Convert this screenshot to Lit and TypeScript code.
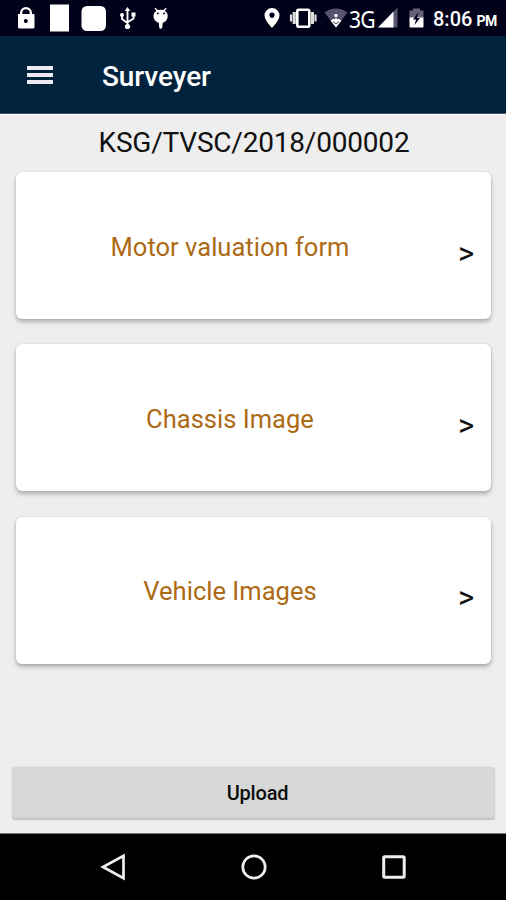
import { LitElement, html, css, svg } from "lit";
import { customElement, property } from "lit/decorators.js";

@customElement("survey-card")
class SurveyCard extends LitElement {
  @property() label = "";

  static styles = css`
    :host {
      display: flex;
      align-items: center;
      box-sizing: border-box;
      height: 147px;
      padding: 0 16px 0 0;
      background: #fff;
      border-radius: 6px;
      box-shadow: 0 3px 4px rgba(0, 0, 0, 0.26), 0 0 2px rgba(0, 0, 0, 0.14);
    }
    .label {
      flex: 1;
      text-align: center;
      color: #ad6a14;
      font-size: 25.5px;
      line-height: 32px;
      letter-spacing: 0.02px;
      padding-top: 2px;
    }
    .chevron {
      width: 17px;
      margin-left: 14px;
      padding-top: 16px;
      color: #111;
      font-size: 31px;
      line-height: 32px;
    }
  `;

  render() {
    return html`<span class="label">${this.label}</span><span class="chevron">&gt;</span>`;
  }
}

@customElement("app-root")
class AppRoot extends LitElement {
  static styles = css`
    :host {
      display: flex;
      flex-direction: column;
      width: 506px;
      height: 900px;
      background: #eee;
      font-family: Roboto, sans-serif;
      color: #111;
      overflow: hidden;
    }
    svg {
      display: block;
      flex: none;
    }
    .status {
      display: flex;
      align-items: center;
      height: 36px;
      flex: none;
      background: #01011a;
      color: #fff;
    }
    .network {
      width: 28px;
      margin-left: -1px;
      font-family: "Noto Sans", sans-serif;
      font-size: 24px;
      line-height: 36px;
      letter-spacing: -1px;
      transform: scaleX(0.88);
      transform-origin: left;
      padding-top: 1px;
    }
    .clock {
      margin-left: 8px;
      font-size: 20px;
      font-weight: 500;
      line-height: 36px;
      padding-top: 3px;
      white-space: nowrap;
    }
    .meridiem {
      font-size: 14px;
      font-weight: 700;
      letter-spacing: -0.5px;
      margin-left: 4px;
    }
    .toolbar {
      display: flex;
      align-items: center;
      flex: none;
      box-sizing: border-box;
      height: 78px;
      padding-left: 27px;
      background: #02233d;
      border-bottom: 1px solid #3f5468;
    }
    .menu {
      display: flex;
      flex-direction: column;
      gap: 3px;
      width: 26px;
    }
    .bar {
      height: 4px;
      background: #ece9f2;
    }
    .title {
      margin: 5px 0 0 49px;
      color: #fff;
      font-size: 28px;
      font-weight: 500;
      line-height: 34px;
      letter-spacing: -0.1px;
    }
    .content {
      display: flex;
      flex-direction: column;
      flex: 1;
      border-top: 1px solid #fff;
    }
    .reference {
      height: 57px;
      line-height: 56px;
      font-size: 28px;
      letter-spacing: -0.2px;
      text-align: center;
      padding-left: 2px;
    }
    .cards {
      display: flex;
      flex-direction: column;
      gap: 25.3px;
      padding: 0 15px 0 16px;
    }
    .upload {
      margin: auto 11px 13px 12px;
      height: 53px;
      box-sizing: border-box;
      border: 0;
      padding: 0 0 0 8px;
      border-radius: 3px;
      background: #d6d8d7;
      box-shadow: inset 0 -2px 1px #c5c6c5, 0 0 2px rgba(0, 0, 0, 0.12);
      color: #0c0c0c;
      font: 500 20px / 53px Roboto, sans-serif;
      letter-spacing: -0.2px;
    }
    .navigation {
      display: flex;
      align-items: center;
      flex: none;
      box-sizing: border-box;
      height: 67px;
      padding-left: 99px;
      gap: 112.5px;
      background: #000;
      border-top: 1px solid #777;
    }
  `;

  private notifications = svg`
    <g fill="#fff">
      <path fill-rule="evenodd" d="M18 14h2v-1a6 6 0 0 1 12 0v1h1.500q1 0 1 1v12q0 1.500-1.500 1.500H19.500q-1.500 0-1.500-1.500zM22.300 14h7.400v-1a3.700 3.700 0 0 0-7.400 0zM25.800 19a2 2 0 1 0 .01 0z"/>
      <rect x="50" y="4.500" width="19" height="27"/>
      <rect x="81.500" y="6" width="24.500" height="25" rx="5.500"/>
      <path d="M127.500 7l2.800 4h-5.600z"/>
      <circle cx="127.500" cy="26.500" r="2.600"/>
      <circle cx="122" cy="15" r="2"/>
      <rect x="131.500" y="12.500" width="4" height="4"/>
      <path d="M153.500 16q0-3.500 3-5.200l-2-2.400 1-.7 2.300 2.400q2.700-.8 5.600 0l2.300-2.400 1 .7-2 2.400q3 1.700 3 5.200 0 5-4.900 6.700l-.6 5.300q-1.600 1.600-2.900 0l-.6-5.300q-5.200-1.700-5.200-6.700z"/>
    </g>
    <path d="M127.500 9v17M122 15v4l5.500 4M133.500 15v3.500l-5.500 3.500" fill="none" stroke="#fff" stroke-width="1.900"/>
    <circle cx="157.800" cy="13.500" r=".9" fill="#01011a"/>
    <circle cx="164" cy="13.500" r=".9" fill="#01011a"/>
  `;

  private indicators = svg`
    <path fill="#fff" fill-rule="evenodd" d="M272 28q-7.500-8-7.500-12.500a7.500 7.500 0 0 1 15 0Q279.500 20 272 28zM272 12.500a2.700 2.700 0 1 0 .01 0z"/>
    <rect x="297.300" y="9.800" width="12" height="16.900" rx="1.500" fill="none" stroke="#fff" stroke-width="2.600"/>
    <path d="M294.200 12v12M312.400 12v12" stroke="#ddd" stroke-width="3.200"/>
    <path d="M291 14.500v7M315.500 14.500v7" stroke="#ddd" stroke-width="2.200"/>
    <path d="M324.500 12.500q11.500-8 23 0L336 27.500z" fill="#55536d"/>
    <path d="M330.500 20.500q5.500-4 11 0L336 27.500z" fill="#fff"/>
    <circle cx="336" cy="15.500" r="1.700" fill="#fff"/>
    <path d="M333 21.500l3 2.500 3-2.500" fill="none" stroke="#35334e" stroke-width="1"/>
  `;

  render() {
    return html`
      <header class="status">
        <svg width="180" height="36" viewBox="0 0 180 36">${this.notifications}</svg>
        <svg width="170" height="36" viewBox="180 0 170 36">${this.indicators}</svg>
        <span class="network">3G</span>
        <svg width="48" height="36" viewBox="377 0 48 36">
          <path d="M397.500 7.500v20H378z" fill="#55536d" />
          <path d="M393.500 11.500v16H378z" fill="#fff" />
          <path d="M409.500 10.500h3.500v-2h7v2h3.500V18h-14z" fill="#66647a" />
          <path d="M409.500 17.500h14v9q0 1-1 1h-12q-1 0-1-1z" fill="#fff" />
          <path d="M418.500 12l-5.500 7.500h3l-1.500 5.500 5.500-7h-3z" fill="#01011a" />
        </svg>
        <span class="clock">8:06<span class="meridiem">PM</span></span>
      </header>
      <nav class="toolbar">
        <div class="menu"><div class="bar"></div><div class="bar"></div><div class="bar"></div></div>
        <div class="title">Surveyer</div>
      </nav>
      <main class="content">
        <div class="reference">KSG/TVSC/2018/000002</div>
        <div class="cards">
          ${["Motor valuation form", "Chassis Image", "Vehicle Images"].map(
            (label) => html`<survey-card .label=${label}></survey-card>`
          )}
        </div>
        <button class="upload">Upload</button>
      </main>
      <footer class="navigation">
        <svg width="28" height="28" viewBox="0 0 28 28" fill="none" stroke="#eee" stroke-width="2.700">
          <path d="M24.500 2.700v22.600L4 14z" />
        </svg>
        <svg width="28" height="28" viewBox="0 0 28 28" fill="none" stroke="#eee" stroke-width="2.700">
          <circle cx="14" cy="14" r="11.200" />
        </svg>
        <svg width="28" height="28" viewBox="0 0 28 28" fill="none" stroke="#eee" stroke-width="3">
          <rect x="3.700" y="3.700" width="20.500" height="20.500" rx="1" />
        </svg>
      </footer>
    `;
  }
}
